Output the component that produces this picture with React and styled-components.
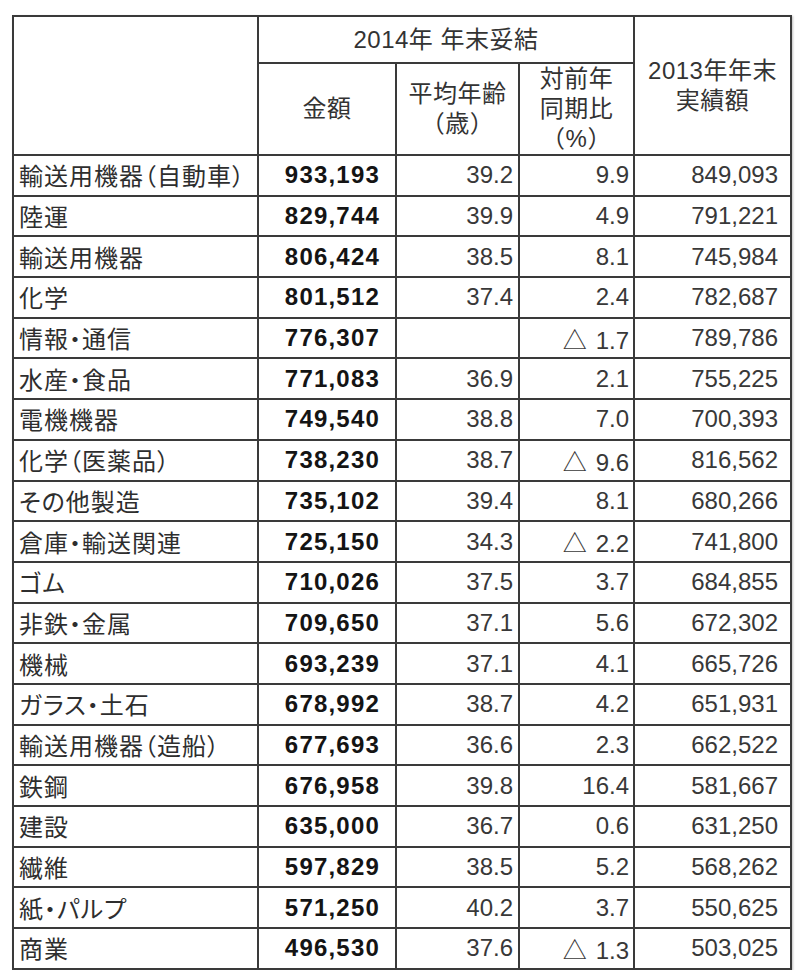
import styled, { createGlobalStyle } from 'styled-components';

const GlobalStyle = createGlobalStyle`
  html, body {
    margin: 0;
    padding: 0;
    background: #fff;
  }
`;

const rows = [
  ['輸送用機器（自動車）', '933,193', '39.2', '9.9', '849,093'],
  ['陸運', '829,744', '39.9', '4.9', '791,221'],
  ['輸送用機器', '806,424', '38.5', '8.1', '745,984'],
  ['化学', '801,512', '37.4', '2.4', '782,687'],
  ['情報・通信', '776,307', '', '△ 1.7', '789,786'],
  ['水産・食品', '771,083', '36.9', '2.1', '755,225'],
  ['電機機器', '749,540', '38.8', '7.0', '700,393'],
  ['化学（医薬品）', '738,230', '38.7', '△ 9.6', '816,562'],
  ['その他製造', '735,102', '39.4', '8.1', '680,266'],
  ['倉庫・輸送関連', '725,150', '34.3', '△ 2.2', '741,800'],
  ['ゴム', '710,026', '37.5', '3.7', '684,855'],
  ['非鉄・金属', '709,650', '37.1', '5.6', '672,302'],
  ['機械', '693,239', '37.1', '4.1', '665,726'],
  ['ガラス・土石', '678,992', '38.7', '4.2', '651,931'],
  ['輸送用機器（造船）', '677,693', '36.6', '2.3', '662,522'],
  ['鉄鋼', '676,958', '39.8', '16.4', '581,667'],
  ['建設', '635,000', '36.7', '0.6', '631,250'],
  ['繊維', '597,829', '38.5', '5.2', '568,262'],
  ['紙・パルプ', '571,250', '40.2', '3.7', '550,625'],
  ['商業', '496,530', '37.6', '△ 1.3', '503,025'],
];

const Page = styled.div`
  padding: 15px 0 0 12px;
`;

const Table = styled.table`
  border-collapse: collapse;
  width: 778px;
  table-layout: fixed;
  font-family: "Liberation Sans", "Noto Sans CJK JP", sans-serif;
  color: #333;
  box-shadow: 1px 1px 2px rgba(0, 0, 0, 0.25);
`;

const HeadCell = styled.th`
  border: 2px solid #3a3a3a;
  font-weight: 400;
  font-size: 24px;
  line-height: 30px;
  letter-spacing: 0.5px;
  text-align: center;
  vertical-align: middle;
  padding: 0 2px;
  height: ${(p) => p.$h || 'auto'};
`;

const LabelCell = styled.td`
  border: 2px solid #3a3a3a;
  font-family: "Noto Sans CJK JP", sans-serif;
  font-size: 24px;
  letter-spacing: 1px;
  font-feature-settings: "palt";
  line-height: 30px;
  padding: 0 0 0 5px;
  height: 38.7px;
  white-space: nowrap;
  color: #2e2e2e;
`;

const NumCell = styled.td`
  border: 2px solid #3a3a3a;
  font-size: 24px;
  text-align: right;
  white-space: nowrap;
  padding: 0 ${(p) => p.$pad}px 0 0;
  font-weight: ${(p) => (p.$bold ? 700 : 400)};
  letter-spacing: ${(p) => (p.$bold ? '1.2px' : '0')};
  color: ${(p) => (p.$bold ? '#141414' : '#383838')};
`;

const Tri = styled.span`
  font-family: "Noto Sans CJK JP", sans-serif;
  font-size: 24px;
  margin-right: 9px;
`;

function Change({ value }) {
  if (value.startsWith('△')) {
    return (
      <>
        <Tri>△</Tri>
        {value.slice(2)}
      </>
    );
  }
  return value;
}

export default function App() {
  return (
    <Page>
      <GlobalStyle />
      <Table>
        <colgroup>
          <col style={{ width: 245 }} />
          <col style={{ width: 138 }} />
          <col style={{ width: 123 }} />
          <col style={{ width: 115 }} />
          <col style={{ width: 157 }} />
        </colgroup>
        <thead>
          <tr>
            <HeadCell rowSpan={2} />
            <HeadCell colSpan={3} $h="45px">2014年 年末妥結</HeadCell>
            <HeadCell rowSpan={2}>
              2013年年末
              <br />
              実績額
            </HeadCell>
          </tr>
          <tr>
            <HeadCell $h="88px">金額</HeadCell>
            <HeadCell>
              平均年齢
              <br />
              （歳）
            </HeadCell>
            <HeadCell>
              対前年
              <br />
              同期比
              <br />
              （%）
            </HeadCell>
          </tr>
        </thead>
        <tbody>
          {rows.map((r) => (
            <tr key={r[0]}>
              <LabelCell>{r[0]}</LabelCell>
              <NumCell $bold $pad={15}>{r[1]}</NumCell>
              <NumCell $pad={5}>{r[2]}</NumCell>
              <NumCell $pad={4}>
                <Change value={r[3]} />
              </NumCell>
              <NumCell $pad={12}>{r[4]}</NumCell>
            </tr>
          ))}
        </tbody>
      </Table>
    </Page>
  );
}
